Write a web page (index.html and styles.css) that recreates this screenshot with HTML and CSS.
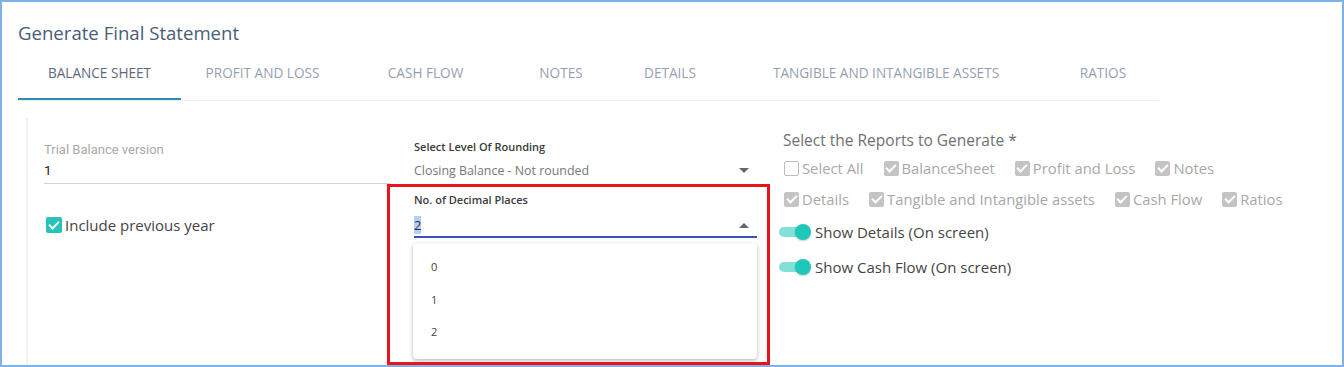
FILE: index.html
```html
<!DOCTYPE html>
<html lang="en">
<head>
  <meta charset="UTF-8">
  <title>Generate Final Statement</title>
  <link rel="stylesheet" href="styles.css">
</head>
<body>

  <div class="frame">
    <h1 class="title">Generate Final Statement</h1>

    <div class="tabs">
      <div class="tab tab-bs active">Balance Sheet</div>
      <div class="tab tab-pl">Profit and Loss</div>
      <div class="tab tab-cf">Cash Flow</div>
      <div class="tab tab-notes">Notes</div>
      <div class="tab tab-details">Details</div>
      <div class="tab tab-assets">Tangible and Intangible Assets</div>
      <div class="tab tab-ratios">Ratios</div>
    </div>

    <div class="content">
      <div class="col col-left">
        <div class="field">
          <div class="field-label">Trial Balance version</div>
          <div class="field-value">1</div>
        </div>
        <label class="check-main">
          <span class="box checked"></span>
          <span>Include previous year</span>
        </label>
      </div>

      <div class="col col-mid">
        <div class="select select-round">
          <div class="select-label">Select Level Of Rounding</div>
          <div class="select-row">
            <span class="select-value">Closing Balance - Not rounded</span>
            <span class="caret down"></span>
          </div>
        </div>
        <div class="select select-dec">
          <div class="select-label">No. of Decimal Places</div>
          <div class="select-row">
            <span class="select-value dark"><span class="hl">2</span></span>
            <span class="caret up"></span>
          </div>
          <div class="menu">
            <div class="option">0</div>
            <div class="option">1</div>
            <div class="option">2</div>
          </div>
        </div>
      </div>

      <div class="col col-right">
        <div class="reports-title">Select the Reports to Generate *</div>
        <div class="report-row">
          <span class="report"><span class="rbox"></span>Select All</span>
          <span class="report"><span class="rbox on"></span>BalanceSheet</span>
          <span class="report"><span class="rbox on"></span>Profit and Loss</span>
          <span class="report"><span class="rbox on"></span>Notes</span>
        </div>
        <div class="report-row">
          <span class="report"><span class="rbox on"></span>Details</span>
          <span class="report"><span class="rbox on"></span>Tangible and Intangible assets</span>
          <span class="report"><span class="rbox on"></span>Cash Flow</span>
          <span class="report"><span class="rbox on"></span>Ratios</span>
        </div>
        <div class="toggle-row first">
          <span class="switch"><span class="thumb"></span></span>
          <span>Show Details (On screen)</span>
        </div>
        <div class="toggle-row">
          <span class="switch"><span class="thumb"></span></span>
          <span>Show Cash Flow (On screen)</span>
        </div>
      </div>
    </div>

    <div class="highlight-box"></div>
  </div>

</body>
</html>
```

FILE: styles.css
```css
* {
  box-sizing: border-box;
}

body {
  margin: 0;
  background: #fff;
  font-family: 'Open Sans', sans-serif;
  color: #444;
}

.frame {
  position: relative;
  height: 367px;
  border: 2px solid #7fb2e5;
  padding: 0 0 0 16px;
  overflow: hidden;
}

.title {
  margin: 0;
  padding-top: 19px;
  font-size: 18.6px;
  line-height: 24px;
  font-weight: 400;
  color: #4b5b78;
}

.tabs {
  display: flex;
  width: 1141px;
  margin-top: 14px;
  border-bottom: 1px solid #efefef;
}

.tab {
  height: 41px;
  padding-top: 3px;
  text-align: center;
  text-transform: uppercase;
  font-size: 13.6px;
  line-height: 22px;
  color: #959fb0;
  white-space: nowrap;
}

.tab.active {
  color: #5d687d;
  border-bottom: 2px solid #2f8bb2;
}

.tab-bs { width: 163px; }
.tab-pl { width: 163px; }
.tab-cf { width: 163px; }
.tab-notes { width: 108px; }
.tab-details { width: 110px; }
.tab-assets { width: 322px; }
.tab-ratios { width: 112px; }

.content {
  display: flex;
  margin: 17px 0 0 8px;
  height: 260px;
  border-left: 2px solid #f1f1f1;
}

.col {
  display: flex;
  flex-direction: column;
}

.col-left {
  width: 346px;
  margin-left: 16px;
}

.field {
  padding-top: 24px;
  padding-bottom: 3px;
  border-bottom: 1px solid #d4d4d4;
}

.field-label {
  font-family: Roboto, sans-serif;
  font-size: 13px;
  line-height: 16px;
  color: #a9a9a9;
}

.field-value {
  margin-top: 2px;
  font-family: Roboto, sans-serif;
  font-size: 13.5px;
  line-height: 20px;
  color: #222;
}

.check-main {
  display: flex;
  align-items: center;
  gap: 3px;
  margin-top: 31px;
  font-size: 15px;
  line-height: 20px;
  color: #444;
}

.box {
  width: 16px;
  height: 16px;
  border-radius: 2px;
  margin-left: 2px;
  position: relative;
}

.box.checked {
  background: #27c3b6;
}

.box.checked::after,
.rbox.on::after {
  content: '';
  position: absolute;
  left: 5px;
  top: 2px;
  width: 4px;
  height: 8px;
  border: solid #fff;
  border-width: 0 2px 2px 0;
  transform: rotate(45deg);
}

.col-mid {
  width: 343px;
  margin-left: 24px;
}

.select-label {
  font-size: 11px;
  line-height: 16px;
  font-weight: 600;
  color: #3a3a3a;
}

.select-round {
  padding-top: 21px;
}

.select-row {
  display: flex;
  align-items: center;
  justify-content: space-between;
  height: 20px;
  padding-right: 8px;
}

.select-round .select-row {
  margin-top: 5px;
}

.select-value {
  font-size: 12.4px;
  color: #777;
}

.select-value.dark {
  font-size: 13px;
  color: #333;
}

.hl {
  background: #b2cff5;
}

.caret {
  width: 0;
  height: 0;
  border-left: 5px solid transparent;
  border-right: 5px solid transparent;
}

.caret.down {
  border-top: 5px solid #666;
}

.caret.up {
  border-bottom: 5px solid #666;
}

.select-dec {
  position: relative;
  margin-top: 12px;
}

.select-dec .select-row {
  margin-top: 6px;
  border-bottom: 2px solid #3f51b5;
  height: 24px;
}

.menu {
  position: absolute;
  left: -1px;
  top: 51px;
  width: 344px;
  padding: 8px 0 10px;
  background: #fff;
  border-radius: 4px;
  box-shadow: 0 2px 4px rgba(0, 0, 0, 0.25), 0 0 2px rgba(0, 0, 0, 0.08);
}

.option {
  height: 32.5px;
  line-height: 32.5px;
  padding-left: 18px;
  font-size: 11px;
  color: #444;
}

.col-right {
  margin-left: 26px;
  padding-top: 12px;
}

.reports-title {
  font-size: 15.5px;
  line-height: 20px;
  color: #707070;
}

.report-row {
  display: flex;
  gap: 20px;
  margin-top: 7px;
  height: 22px;
  align-items: center;
  padding-left: 1px;
}

.report-row + .report-row {
  margin-top: 9px;
}

.report {
  display: flex;
  align-items: center;
  gap: 3px;
  font-size: 14.8px;
  color: #a8a8a8;
  white-space: nowrap;
}

.rbox {
  position: relative;
  width: 15px;
  height: 15px;
  border-radius: 2px;
  border: 1.5px solid #bdbdbd;
}

.rbox.on {
  background: #c4c4c4;
  border-color: #c4c4c4;
}

.rbox.on::after {
  left: 3.5px;
  top: 0.5px;
}

.toggle-row {
  display: flex;
  align-items: center;
  gap: 6px;
  margin-top: 15px;
  height: 20px;
  font-size: 15px;
  color: #444;
}

.toggle-row.first {
  margin-top: 12px;
}

.switch {
  position: relative;
  width: 30px;
  height: 10px;
  margin-left: -4px;
  border-radius: 5px;
  background: #82e0d7;
}

.thumb {
  position: absolute;
  right: -2px;
  top: -3px;
  width: 16px;
  height: 16px;
  border-radius: 50%;
  background: #1ec8b8;
  box-shadow: 0 1px 2px rgba(0, 0, 0, 0.2);
}

.highlight-box {
  position: absolute;
  left: 385px;
  top: 182px;
  width: 383px;
  height: 181px;
  border: 3px solid #e8141c;
}
```
